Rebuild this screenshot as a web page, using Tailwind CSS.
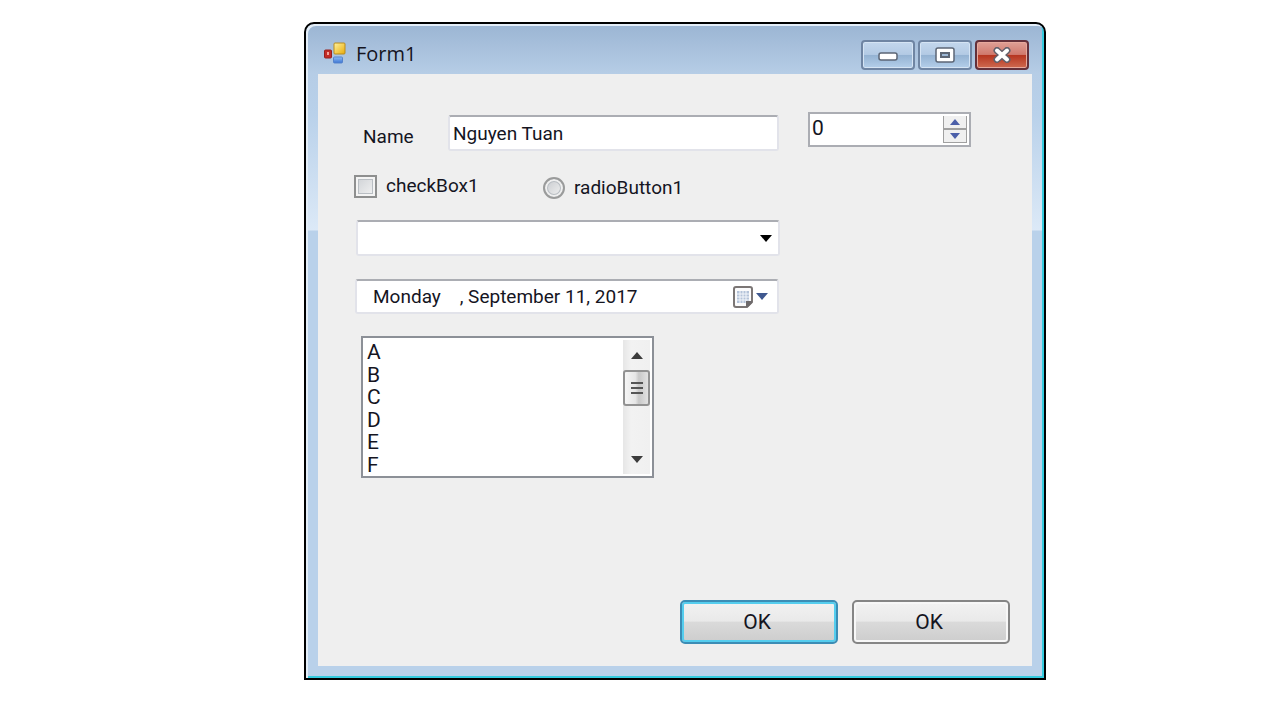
<!DOCTYPE html>
<html lang="en">
<head>
<meta charset="utf-8">
<meta name="viewport" content="width=device-width, initial-scale=1">
<title>Form1</title>
<script src="https://cdn.jsdelivr.net/npm/@tailwindcss/browser@4"></script>
</head>
<body class="bg-white pt-[22px] pr-[234px] pb-10 pl-[304px] font-['Roboto',sans-serif] text-[19px] leading-6 text-[#15151f]">
<main class="flex flex-col rounded-t-[10px] border-2 border-black bg-[#b9d1ea] bg-[linear-gradient(to_bottom,#9bb5d3_0,#b6cde6_50px,#b9d1ea_90px,#dce9f7_206px,#b9d1ea_207px)] px-3 pb-3 shadow-[inset_2px_2px_0_#e4eef8,inset_-2px_-2px_0_#35cbdf]">
  <header class="flex h-[50px] items-center">
    <svg class="mt-2.5 ml-[5px] size-6" viewBox="0 0 24 24" aria-hidden="true">
      <defs>
        <linearGradient id="gy" x2="1" y2="1"><stop stop-color="#fff3a0"/><stop offset="1" stop-color="#e9ab08"/></linearGradient>
        <linearGradient id="gb" x2="0" y2="1"><stop stop-color="#8fbcf5"/><stop offset="1" stop-color="#3b74d2"/></linearGradient>
      </defs>
      <rect x="11" y="1" width="11" height="11" rx="1" fill="url(#gy)" stroke="#b98b1c"/>
      <rect x="1.500" y="8" width="7" height="8" rx="1" fill="#c32c27" stroke="#96201f"/>
      <rect x="4" y="10" width="2" height="3" fill="#f4a49a"/>
      <rect x="10.500" y="15" width="9" height="6" rx="1" fill="url(#gb)" stroke="#5583cc"/>
    </svg>
    <h1 class="mt-2.5 ml-[9px] flex-1 font-['Open_Sans',sans-serif] text-[20px]">Form1</h1>
    <div class="mt-3 mr-[3px] flex gap-[3px]">
      <button type="button" aria-label="Minimize" class="flex h-[30px] w-[54px] items-center justify-center rounded-[4px] border-2 border-[#6f85a3] bg-[linear-gradient(#c3d7ed_0,#b3cae4_48%,#94b2d2_50%,#b4cfea_100%)] shadow-[inset_0_0_0_1px_#d5e4f4]">
        <svg class="mt-1 h-[10px] w-[20px]" viewBox="0 0 20 10"><rect x="1" y="1" width="18" height="7" rx="2" fill="#fff" stroke="#5c6675" stroke-width="1.500"/></svg>
      </button>
      <button type="button" aria-label="Maximize" class="flex h-[30px] w-[54px] items-center justify-center rounded-[4px] border-2 border-[#6f85a3] bg-[linear-gradient(#c3d7ed_0,#b3cae4_48%,#94b2d2_50%,#b4cfea_100%)] shadow-[inset_0_0_0_1px_#d5e4f4]">
        <svg class="h-[17px] w-[20px]" viewBox="0 0 20 17"><rect x="1" y="1" width="18" height="14" rx="2" fill="#fff" stroke="#5c6675" stroke-width="1.500"/><rect x="6" y="6" width="8" height="4" fill="#9db8d5" stroke="#5c6675" stroke-width="2"/></svg>
      </button>
      <button type="button" aria-label="Close" class="flex h-[30px] w-[54px] items-center justify-center rounded-[4px] border-2 border-[#63303a] bg-[linear-gradient(#dfa096_0,#d0796d_48%,#b5341f_50%,#cf6a50_100%)] shadow-[inset_0_0_0_1px_#e7a99d]">
        <svg class="h-4 w-5" viewBox="0 0 20 16" fill="none"><path d="M5 3.500 15 12.500M15 3.500 5 12.500" stroke="#62606b" stroke-width="7" stroke-linecap="round"/><path d="M5 3.500 15 12.500M15 3.500 5 12.500" stroke="#fff" stroke-width="4" stroke-linecap="round"/></svg>
      </button>
    </div>
  </header>

  <form class="flex flex-col bg-[#efefef] pt-[38px] pr-[22px] pb-[22px] pl-9">
    <div class="flex items-start">
      <label for="name" class="mt-[13px] ml-[9px] w-[85px]">Name</label>
      <input id="name" type="text" value="Nguyen Tuan" class="mt-[3px] h-9 min-w-0 max-w-[331px] flex-1 rounded-[3px] border-2 border-[#e2e3ea] border-t-[#abadb3] bg-white px-[3px] outline-none">
      <div class="ml-[29px] flex h-[35px] w-[163px] border-2 border-[#abadb3] bg-white p-0.5">
        <input type="number" value="0" aria-label="Number" class="h-6 min-w-0 flex-1 bg-transparent text-[21px] outline-none [appearance:textfield]">
        <div class="flex w-6 flex-col">
          <button type="button" aria-label="Increase" class="flex flex-1 items-center justify-center border-x border-b border-[#a0a0a0] bg-[#f0f0f0]"><svg class="h-1.5 w-2.5" viewBox="0 0 10 6"><path d="M5 0 10 6H0z" fill="#4b5fa9"/></svg></button>
          <button type="button" aria-label="Decrease" class="flex flex-1 items-center justify-center border border-[#a0a0a0] bg-[#f0f0f0]"><svg class="h-1.5 w-2.5" viewBox="0 0 10 6"><path d="M0 0H10L5 6z" fill="#4b5fa9"/></svg></button>
        </div>
      </div>
    </div>

    <div class="mt-[21px] flex items-center">
      <label class="flex w-[189px] items-center gap-[9px]"><input type="checkbox" class="size-[23px] appearance-none border-2 border-[#8e8f8f] bg-[linear-gradient(135deg,#cdd0d4,#f4f4f4)] shadow-[inset_0_0_0_2px_#f4f4f4,inset_0_0_0_3px_#b9bec3]">checkBox1</label>
      <label class="mt-1 flex items-center gap-[9px]"><input type="radio" class="size-[22px] appearance-none rounded-full border-2 border-[#9a9b9b] bg-[linear-gradient(135deg,#c5c8cc,#f4f4f4)] shadow-[inset_0_0_0_2px_#f0f0f0,inset_0_0_0_3px_#b9bec3]">radioButton1</label>
    </div>

    <div class="relative mt-5 ml-0.5 max-w-[424px]">
      <select aria-label="Combo box" class="block h-9 w-full appearance-none rounded-[3px] border-2 border-[#e2e3ea] border-t-[#abadb3] bg-white px-1 outline-none"><option></option></select>
      <svg class="pointer-events-none absolute top-[15px] right-2 h-2 w-3" viewBox="0 0 12 8"><path d="M0 0H12L6 7z" fill="#000"/></svg>
    </div>

    <div class="mt-[23px] ml-px flex h-[35px] max-w-[424px] items-center rounded-[3px] border-2 border-[#e2e3ea] border-t-[#abadb3] bg-white pr-[9px] pl-4">
      <input type="text" aria-label="Date" value="Monday    , September 11, 2017" class="h-7 min-w-0 flex-1 bg-transparent outline-none">
      <button type="button" aria-label="Open calendar" class="flex items-center gap-[3px]">
        <svg class="h-[22px] w-5" viewBox="0 0 20 22"><path d="M3 1H17Q19 1 19 3V16L14 21H3Q1 21 1 19V3Q1 1 3 1z" fill="#fbfbfc" stroke="#7b7675" stroke-width="2"/><rect x="4" y="5" width="12" height="12" fill="#b4c3d9"/><path d="M4 8H16M4 11H16M4 14H16M7 5V17M10 5V17M13 5V17" stroke="#f3f6fb"/><path d="M19 15V17L15 21H13V15z" fill="#6e6a6c"/></svg>
        <svg class="h-[7px] w-3" viewBox="0 0 12 7"><path d="M0 0H12L6 7z" fill="#3f588f"/></svg>
      </button>
    </div>

    <div class="mt-[22px] ml-[7px] flex h-[142px] max-w-[293px] border-2 border-[#8c9097] bg-white p-0.5">
      <select size="6" aria-label="List box" class="h-full min-w-0 flex-1 appearance-none overflow-hidden bg-white text-[21px] outline-none">
        <option class="h-[23px] min-h-0 p-0 pl-0.5 leading-[23px]">A</option>
        <option class="h-[22px] min-h-0 p-0 pl-0.5 leading-[22px]">B</option>
        <option class="h-[23px] min-h-0 p-0 pl-0.5 leading-[23px]">C</option>
        <option class="h-[22px] min-h-0 p-0 pl-0.5 leading-[22px]">D</option>
        <option class="h-[23px] min-h-0 p-0 pl-0.5 leading-[23px]">E</option>
        <option class="h-[22px] min-h-0 p-0 pl-0.5 leading-[22px]">F</option>
      </select>
      <div class="flex w-[27px] flex-col items-center bg-[linear-gradient(to_right,#e6e6e6,#f2f2f2_30%,#f0f0f0)]">
        <button type="button" aria-label="Scroll up" class="flex h-[30px] w-full items-center justify-center"><svg class="h-[7px] w-3" viewBox="0 0 12 7"><path d="M6 0 12 7H0z" fill="#3c3c3c"/></svg></button>
        <div class="flex h-9 w-[27px] flex-col items-center justify-center gap-[3px] rounded-[3px] border-2 border-[#929292] bg-[linear-gradient(to_right,#f5f5f5,#e6e6e6_45%,#c8c8c8_60%,#e2e2e2)]">
          <i class="h-0.5 w-3 bg-[#555]"></i><i class="h-0.5 w-3 bg-[#555]"></i><i class="h-0.5 w-3 bg-[#555]"></i>
        </div>
        <button type="button" aria-label="Scroll down" class="mt-auto flex h-[30px] w-full items-center justify-center"><svg class="h-[7px] w-3" viewBox="0 0 12 7"><path d="M0 0H12L6 7z" fill="#3c3c3c"/></svg></button>
      </div>
    </div>

    <div class="mt-[122px] flex justify-end gap-3.5 text-[21px]">
      <button type="button" class="h-11 w-[158px] rounded-[5px] border-2 border-[#3c8db5] bg-[linear-gradient(#f2f2f2_0,#e9e9e9_48%,#dadada_50%,#cdcdcd_100%)] pr-1 shadow-[inset_0_0_0_2px_#55cdee]">OK</button>
      <button type="button" class="h-11 w-[158px] rounded-[5px] border-2 border-[#858585] bg-[linear-gradient(#f2f2f2_0,#e9e9e9_48%,#dadada_50%,#cdcdcd_100%)] pr-1 shadow-[inset_0_0_0_2px_#f7f7f7]">OK</button>
    </div>
  </form>
</main>
</body>
</html>
